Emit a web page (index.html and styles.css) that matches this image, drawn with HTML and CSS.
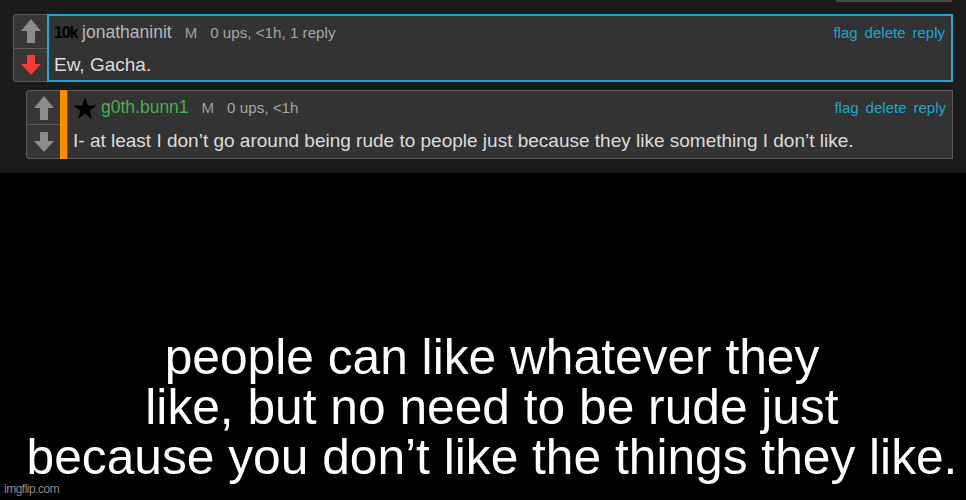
FILE: index.html
```html
<!DOCTYPE html>
<html lang="en">
<head>
  <meta charset="UTF-8">
  <title>Comments</title>
  <link rel="stylesheet" href="styles.css">
</head>
<body>

  <div class="panel">
    <div class="tab"></div>

    <div class="comment">
      <div class="votes">
        <div class="vote">
          <svg width="20" height="24" viewBox="0 0 20 24"><polygon points="10,0 20,12 14,12 14,24 6,24 6,12 0,12" fill="#8c8c8c"/></svg>
        </div>
        <div class="vote">
          <svg width="20" height="20" viewBox="0 0 20 20"><polygon points="6,0 14,0 14,9 20,9 10,20 0,9 6,9" fill="#f23b3b"/></svg>
        </div>
      </div>
      <div class="content selected">
        <div class="head">
          <span class="rank">10k</span>
          <span class="user">jonathaninit</span>
          <span class="gender">M</span>
          <span class="meta">0 ups, &lt;1h, 1 reply</span>
          <span class="actions"><a>flag</a><a>delete</a><a>reply</a></span>
        </div>
        <div class="text">Ew, Gacha.</div>
      </div>
    </div>

    <div class="comment reply">
      <div class="votes">
        <div class="vote">
          <svg width="20" height="24" viewBox="0 0 20 24"><polygon points="10,0 20,12 14,12 14,24 6,24 6,12 0,12" fill="#8c8c8c"/></svg>
        </div>
        <div class="vote">
          <svg width="20" height="20" viewBox="0 0 20 20"><polygon points="6,0 14,0 14,9 20,9 10,20 0,9 6,9" fill="#8c8c8c"/></svg>
        </div>
      </div>
      <div class="stripe"></div>
      <div class="content">
        <div class="head">
          <svg class="star" width="24" height="22" viewBox="0 0 24 22"><polygon points="12,0 14.8,8.4 23.6,8.4 16.5,13.6 19.2,22 12,16.8 4.8,22 7.5,13.6 0.4,8.4 9.2,8.4" fill="#000"/></svg>
          <span class="user green">g0th.bunn1</span>
          <span class="gender">M</span>
          <span class="meta">0 ups, &lt;1h</span>
          <span class="actions"><a>flag</a><a>delete</a><a>reply</a></span>
        </div>
        <div class="text">I- at least I don’t go around being rude to people just because they like something I don’t like.</div>
      </div>
    </div>
  </div>

  <div class="caption">
    <p>people can like whatever they<br>like, but no need to be rude just<br>because you don’t like the things they like.</p>
    <div class="watermark">imgflip.com</div>
  </div>

</body>
</html>
```

FILE: styles.css
```css
body {
  margin: 0;
  padding: 0;
  background-color: #000000;
  font-family: "Liberation Sans", Arial, sans-serif;
}

.panel {
  background-color: #1b1b1b;
  height: 173px;
  box-sizing: border-box;
}

.tab {
  width: 116px;
  height: 2px;
  margin-left: auto;
  margin-right: 14px;
  background-color: #4a4a4a;
}

.comment {
  display: flex;
  height: 68px;
  margin: 12px 13px 0 13px;
}

.comment.reply {
  height: 69px;
  margin-top: 8px;
  margin-left: 26px;
}

.votes {
  width: 33px;
  display: flex;
  flex-direction: column;
  border: 1px solid #5a5a5a;
  border-right: none;
  border-radius: 4px 0 0 4px;
  background-color: #363636;
}

.vote {
  flex: 1;
  display: flex;
  align-items: center;
  justify-content: center;
}

.vote + .vote {
  border-top: 1px solid #5a5a5a;
}

.stripe {
  width: 7px;
  background-color: #ff8c00;
}

.content {
  flex: 1;
  background-color: #333333;
  border: 1px solid #5c5c5c;
  padding: 3px 6px 0 5px;
}

.content.selected {
  border: 2px solid #1fa7d0;
  padding-top: 3px;
}

.head {
  display: flex;
  align-items: baseline;
  height: 26px;
  line-height: 26px;
}

.rank {
  font-size: 16px;
  font-weight: bold;
  color: #000000;
  letter-spacing: -1.2px;
  margin-right: 5px;
}

.star {
  align-self: center;
  margin: 2px 4px 0 0;
}

.user {
  font-size: 17.5px;
  color: #b8b8b8;
  margin-right: 13px;
}

.user.green {
  color: #4cae4c;
}

.gender {
  font-size: 15px;
  color: #a0a0a0;
  margin-right: 13px;
}

.meta {
  font-size: 15.2px;
  color: #a5a5a5;
}

.actions {
  margin-left: auto;
  display: flex;
  gap: 7px;
  font-size: 15px;
  color: #1ea5cf;
}

.text {
  margin-top: 7px;
  font-size: 19px;
  line-height: 26px;
  color: #dcdcdc;
  white-space: nowrap;
}

.reply .text {
  margin-top: 8px;
}

.caption {
  height: 327px;
  padding-top: 159px;
  box-sizing: border-box;
}

.caption p {
  margin: 0;
  padding-left: 18px;
  text-align: center;
  font-size: 49.7px;
  line-height: 50px;
  color: #ffffff;
}

.watermark {
  padding-left: 4px;
  font-size: 12px;
  line-height: 14px;
  color: #8a8a8a;
  letter-spacing: -0.5px;
}
```
